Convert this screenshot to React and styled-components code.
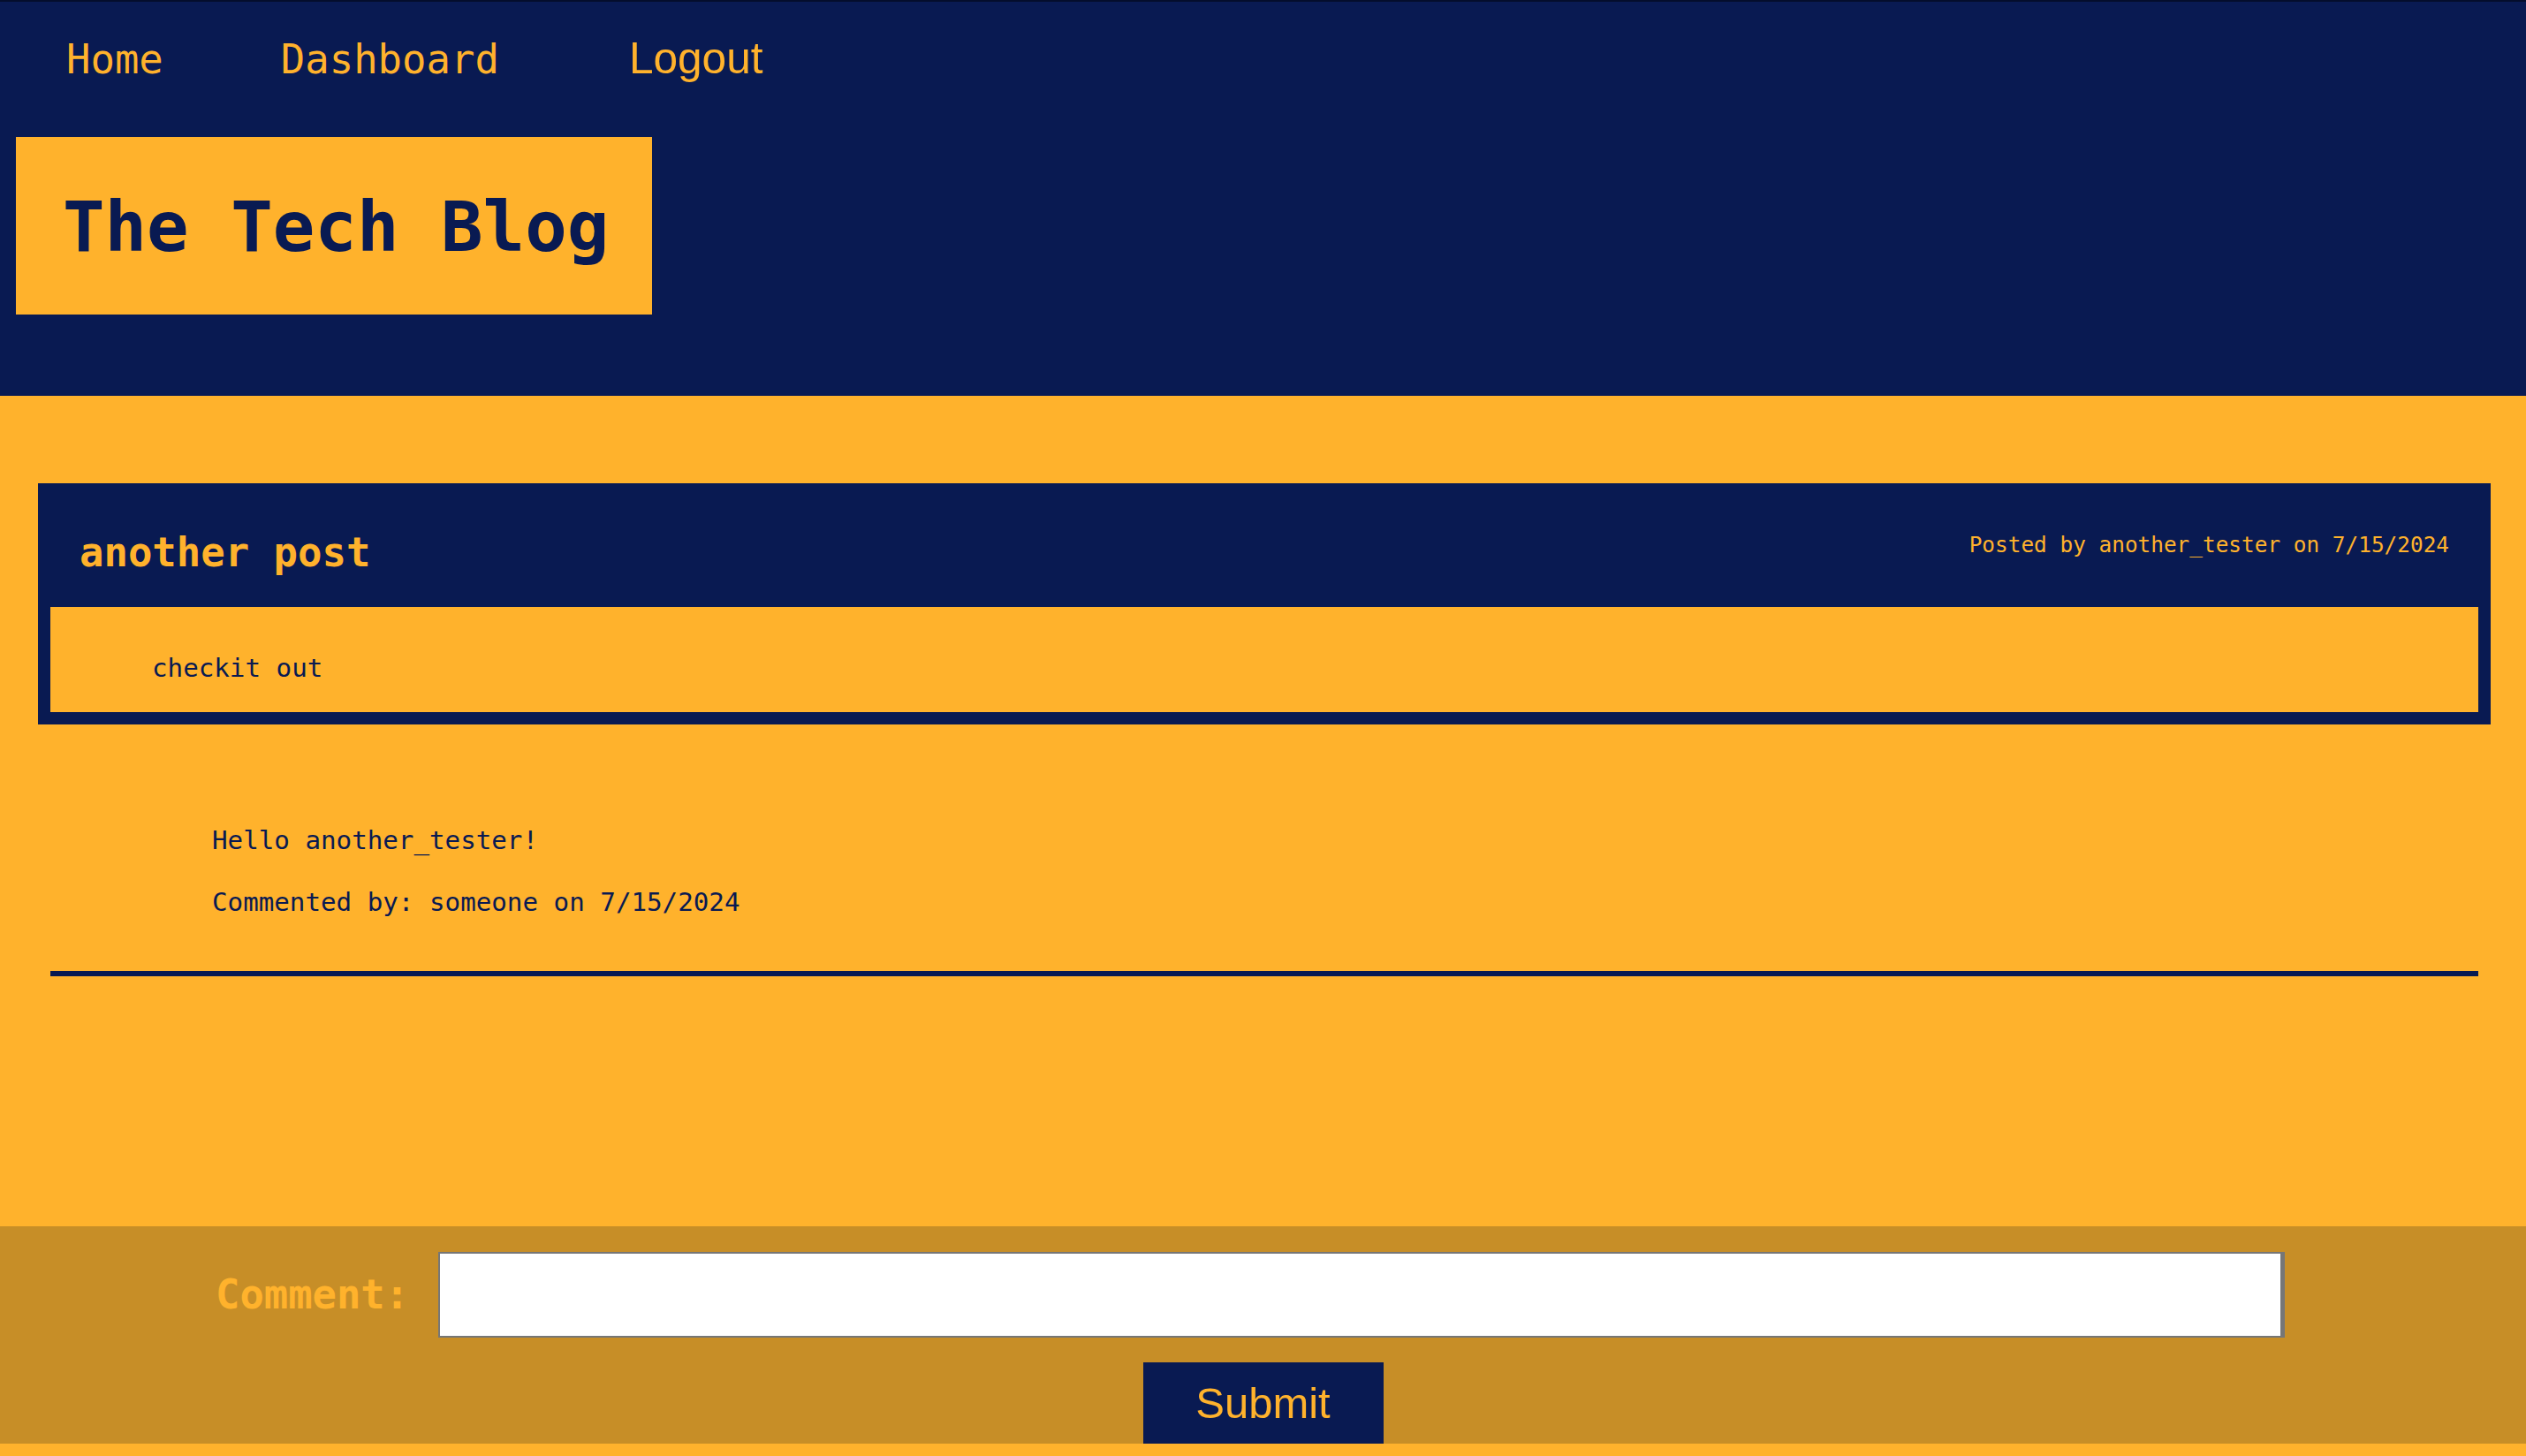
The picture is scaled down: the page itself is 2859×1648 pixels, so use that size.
import React from 'react';
import styled, { createGlobalStyle } from 'styled-components';

const navy = '#091a52';
const orange = '#ffb22c';
const bronze = '#c78e27';

const GlobalStyle = createGlobalStyle`
  html, body {
    margin: 0;
    padding: 0;
    background: ${orange};
  }
  body {
    font-family: 'DejaVu Sans Mono', 'Liberation Mono', monospace;
    color: ${navy};
  }
`;

const Header = styled.header`
  background: ${navy};
  border-top: 2px solid #040d2c;
  padding: 35px 0 92px;
`;

const Nav = styled.nav`
  display: flex;
  align-items: baseline;
  padding-left: 75px;
  gap: 133px;
`;

const NavLink = styled.a`
  font-size: 45.6px;
  color: ${orange};
  text-decoration: none;
`;

const LogoutButton = styled.button`
  font-family: 'Liberation Sans', Arial, sans-serif;
  font-size: 49.6px;
  color: ${orange};
  background: none;
  border: none;
  padding: 0;
  margin-left: 14px;
  cursor: pointer;
`;

const TitleBox = styled.div`
  display: inline-block;
  margin: 60px 0 0 18px;
  padding: 56px 49px 53px 53px;
  background: ${orange};
`;

const Title = styled.h1`
  margin: 0;
  font-size: 79px;
  font-weight: bold;
  color: ${navy};
`;

const Main = styled.main`
  padding: 99px 40px 0 43px;
`;

const Card = styled.article`
  background: ${navy};
  padding: 0 14px 14px;
`;

const CardHead = styled.div`
  display: flex;
  justify-content: space-between;
  align-items: flex-start;
  height: 140px;
  padding: 0 33px;
`;

const PostTitle = styled.h2`
  margin: 52px 0 0;
  font-size: 45.6px;
  font-weight: bold;
  color: ${orange};
`;

const Meta = styled.p`
  margin: 55px 0 0;
  font-size: 24.4px;
  color: ${orange};
`;

const CardBody = styled.div`
  background: ${orange};
  padding: 52px 0 33px 115px;
  font-size: 29.2px;
`;

const Comments = styled.section`
  padding: 114px 14px 0;
`;

const CommentText = styled.p`
  margin: 0 0 36px 183px;
  font-size: 29.2px;
`;

const Rule = styled.hr`
  margin: 61px 0 0;
  border: none;
  height: 6px;
  background: ${navy};
`;

const Form = styled.form`
  margin-top: 283px;
  background: ${bronze};
  padding-top: 29px;
  display: flex;
  flex-direction: column;
  align-items: center;
  margin-bottom: 15px;
`;

const Row = styled.div`
  align-self: stretch;
  display: flex;
  align-items: center;
  gap: 33px;
  padding-left: 244px;
`;

const Label = styled.label`
  font-size: 45.5px;
  font-weight: bold;
  color: ${orange};
`;

const Input = styled.input`
  box-sizing: border-box;
  width: 2090px;
  height: 97px;
  background: #fff;
  border-style: solid;
  border-color: #767676;
  border-width: 2px 5px 2px 2px;
  font-size: 29px;
`;

const SubmitButton = styled.button`
  margin-top: 28px;
  width: 272px;
  height: 92px;
  background: ${navy};
  color: ${orange};
  border: none;
  font-family: 'Liberation Sans', Arial, sans-serif;
  font-size: 49px;
  cursor: pointer;
`;

export default function App() {
  return (
    <>
      <GlobalStyle />
      <Header>
        <Nav>
          <NavLink href='#'>Home</NavLink>
          <NavLink href='#'>Dashboard</NavLink>
          <LogoutButton type='button'>Logout</LogoutButton>
        </Nav>
        <TitleBox>
          <Title>The Tech Blog</Title>
        </TitleBox>
      </Header>
      <Main>
        <Card>
          <CardHead>
            <PostTitle>another post</PostTitle>
            <Meta>Posted by another_tester on 7/15/2024</Meta>
          </CardHead>
          <CardBody>checkit out</CardBody>
        </Card>
        <Comments>
          <CommentText>Hello another_tester!</CommentText>
          <CommentText>Commented by: someone on 7/15/2024</CommentText>
          <Rule />
        </Comments>
      </Main>
      <Form onSubmit={(e) => e.preventDefault()}>
        <Row>
          <Label htmlFor='comment'>Comment:</Label>
          <Input id='comment' type='text' />
        </Row>
        <SubmitButton type='submit'>Submit</SubmitButton>
      </Form>
    </>
  );
}
